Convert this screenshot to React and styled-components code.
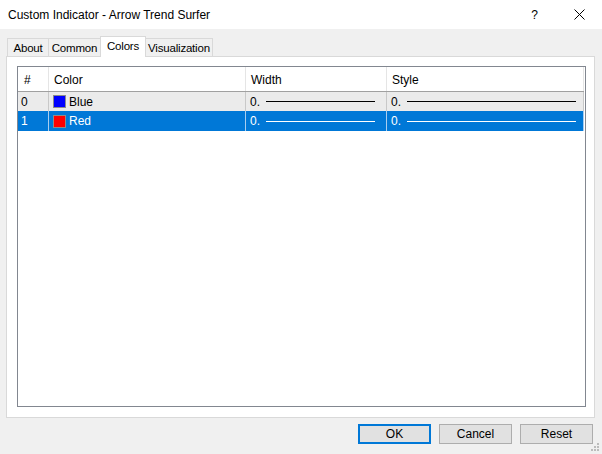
import React from "react";
import styled, { createGlobalStyle } from "styled-components";

const Global = createGlobalStyle`
  html, body { margin: 0; padding: 0; }
  body { background: #f0f0f0; font-family: "Liberation Sans", Arial, sans-serif; }
  * { box-sizing: border-box; }
`;

const Window = styled.div`
  width: 602px;
  height: 454px;
  background: #f0f0f0;
  display: flex;
  flex-direction: column;
  position: relative;
  overflow: hidden;
`;

const TitleBar = styled.div`
  height: 29px;
  background: #ffffff;
  display: flex;
  align-items: center;
  padding-left: 8px;
  font-size: 12px;
  color: #000;
`;

const Title = styled.div`
  flex: 1;
`;

const TitleButton = styled.div`
  width: 45px;
  height: 29px;
  display: flex;
  align-items: center;
  justify-content: center;
  font-size: 12px;
  color: #000;
`;

const Body = styled.div`
  flex: 1;
  display: flex;
  flex-direction: column;
  padding: 7px 7px 0 6px;
`;

const TabStrip = styled.div`
  display: flex;
  align-items: flex-end;
  height: 21px;
  padding-left: 1px;
  position: relative;
  z-index: 1;
  margin-bottom: -1px;
`;

const Tab = styled.div`
  width: ${(p) => p.$w}px;
  height: ${(p) => (p.$active ? 21 : 19)}px;
  background: ${(p) => (p.$active ? "#ffffff" : "#f0f0f0")};
  border: 1px solid #d9d9d9;
  border-bottom: ${(p) => (p.$active ? "none" : "1px solid #d9d9d9")};
  margin-left: ${(p) => (p.$first ? 0 : -1)}px;
  display: flex;
  align-items: ${(p) => (p.$active ? "flex-start" : "center")};
  justify-content: center;
  padding-top: ${(p) => (p.$active ? 3 : 1)}px;
  font-size: 11.5px;
  letter-spacing: -0.2px;
  color: #000;
`;

const Panel = styled.div`
  height: 362px;
  background: #ffffff;
  border: 1px solid #d9d9d9;
  padding: 9px 8px 10px 10px;
  display: flex;
`;

const ListBox = styled.div`
  flex: 1;
  border: 1px solid #828790;
  background: #ffffff;
  display: flex;
  flex-direction: column;
`;

const Row = styled.div`
  display: flex;
  height: ${(p) => p.$h}px;
  background: ${(p) => p.$bg};
  color: ${(p) => p.$fg};
  border-bottom: ${(p) => (p.$header ? "1px solid #a0a0a0" : "none")};
  width: 566px;
`;

const Cell = styled.div`
  width: ${(p) => p.$w}px;
  border-right: 1px solid ${(p) => p.$line};
  display: flex;
  align-items: center;
  padding-left: ${(p) => p.$pl}px;
  padding-right: ${(p) => p.$pr || 0}px;
  padding-top: ${(p) => (p.$header ? 2 : 0)}px;
  font-size: 12px;
  font-family: "Liberation Sans", Arial, sans-serif;
  white-space: nowrap;
  overflow: hidden;
`;

const RowText = styled.span`
  font-size: 12px;
`;

const Swatch = styled.span`
  width: 13px;
  height: 13px;
  border: 1px solid #8c8c8c;
  background: ${(p) => p.$c};
  margin-right: 3px;
  flex: none;
`;

const LineSample = styled.span`
  flex: 1;
  height: 1px;
  background: ${(p) => p.$c};
  margin-left: 6px;
`;

const ButtonRow = styled.div`
  display: flex;
  justify-content: flex-end;
  gap: 8px;
  padding: 6px 2px 0 0;
`;

const Button = styled.div`
  width: 73px;
  height: 20px;
  background: #e1e1e1;
  border: ${(p) => (p.$default ? "2px solid #0078d7" : "1px solid #adadad")};
  display: flex;
  align-items: center;
  justify-content: center;
  font-size: 12px;
  color: #000;
`;

const Grip = styled.svg`
  position: absolute;
  right: 2px;
  bottom: 2px;
`;

const cols = [31, 197, 141, 197];

function DataRow({ idx, colorName, color, selected }) {
  const bg = selected ? "#0078d7" : "#ebebeb";
  const fg = selected ? "#ffffff" : "#000000";
  const line = selected ? "#a8cdef" : "#c8c8c8";
  return (
    <Row $h={selected ? 20 : 19} $bg={bg} $fg={fg}>
      <Cell $w={cols[0]} $line={line} $pl={3}>
        <RowText>{idx}</RowText>
      </Cell>
      <Cell $w={cols[1]} $line={line} $pl={4}>
        <Swatch $c={color} />
        <RowText>{colorName}</RowText>
      </Cell>
      <Cell $w={cols[2]} $line={line} $pl={4} $pr={11}>
        <RowText>0.</RowText>
        <LineSample $c={fg} />
      </Cell>
      <Cell $w={cols[3]} $line={line} $pl={4} $pr={7}>
        <RowText>0.</RowText>
        <LineSample $c={fg} />
      </Cell>
    </Row>
  );
}

export default function App() {
  return (
    <>
      <Global />
      <Window>
        <TitleBar>
          <Title>Custom Indicator - Arrow Trend Surfer</Title>
          <TitleButton>?</TitleButton>
          <TitleButton>
            <svg width="11" height="11" viewBox="0 0 11 11">
              <path d="M0.5 0.5 L10.5 10.5 M10.5 0.5 L0.5 10.5" stroke="#000" strokeWidth="1" fill="none" />
            </svg>
          </TitleButton>
        </TitleBar>
        <Body>
          <TabStrip>
            <Tab $w={42} $first>About</Tab>
            <Tab $w={53}>Common</Tab>
            <Tab $w={46} $active>Colors</Tab>
            <Tab $w={68}>Visualization</Tab>
          </TabStrip>
          <Panel>
            <ListBox>
              <Row $h={25} $bg="#ffffff" $fg="#000" $header>
                <Cell $w={cols[0]} $line="#e5e5e5" $pl={6} $header>#</Cell>
                <Cell $w={cols[1]} $line="#e5e5e5" $pl={5} $header>Color</Cell>
                <Cell $w={cols[2]} $line="#e5e5e5" $pl={5} $header>Width</Cell>
                <Cell $w={cols[3]} $line="#e5e5e5" $pl={5} $header>Style</Cell>
              </Row>
              <DataRow idx="0" colorName="Blue" color="#0000ff" />
              <DataRow idx="1" colorName="Red" color="#ff0000" selected />
            </ListBox>
          </Panel>
          <ButtonRow>
            <Button $default>OK</Button>
            <Button>Cancel</Button>
            <Button>Reset</Button>
          </ButtonRow>
        </Body>
        <Grip width="10" height="10" viewBox="0 0 10 10">
          {[
            [7, 1], [4, 4], [7, 4], [1, 7], [4, 7], [7, 7],
          ].map(([x, y]) => (
            <rect key={`${x}-${y}`} x={x} y={y} width="2" height="2" fill="#bcbcbc" />
          ))}
        </Grip>
      </Window>
    </>
  );
}
